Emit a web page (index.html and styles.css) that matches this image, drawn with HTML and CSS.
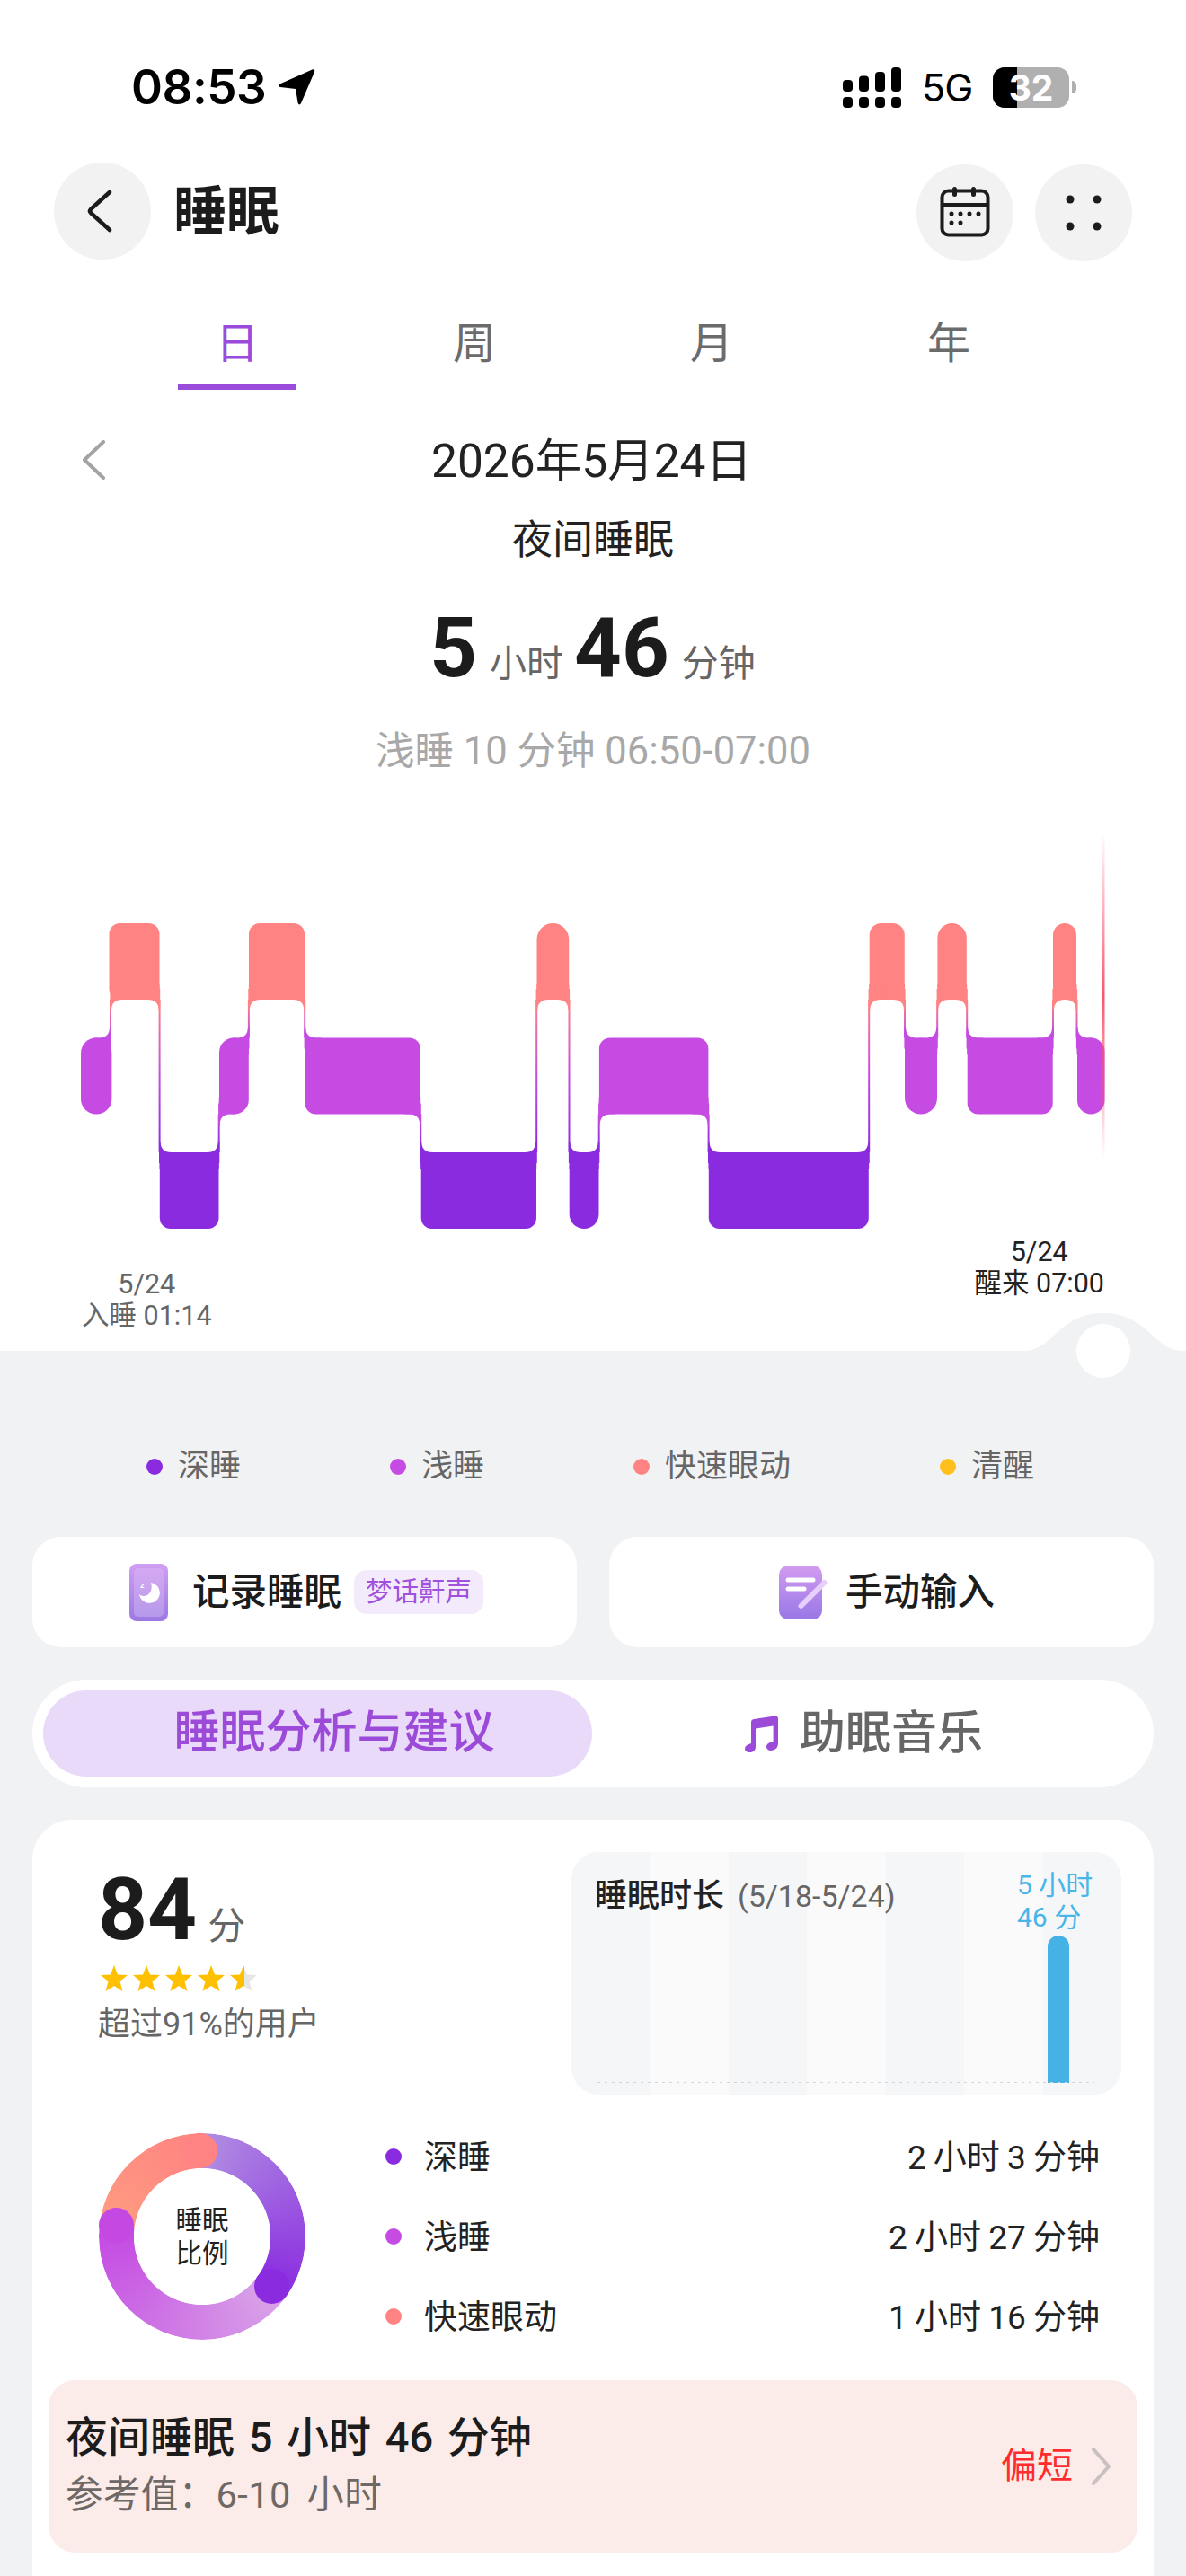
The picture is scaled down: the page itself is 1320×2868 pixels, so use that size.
FILE: index.html
```html
<!DOCTYPE html>
<html lang="zh">
<head>
<meta charset="utf-8">
<title>睡眠</title>
<link rel="stylesheet" href="styles.css">
</head>
<body>
<div class="page">
  <section class="top">
    <div class="status">
      <div class="status-left">
        <span class="time">08:53</span>
        <svg class="loc" viewBox="0 0 42 40"><path d="M38.5.5c2-.9 3.3.5 2.5 2.4L26 38c-.9 2-3 1.8-3.4-.4L20 22 3 20c-2.4-.3-2.7-2.4-.6-3.4z"/></svg>
      </div>
      <div class="status-right">
        <svg class="signal" viewBox="0 0 65 45">
          <rect x="0" y="14" width="11" height="13" rx="4"/><rect x="18" y="9.500" width="11" height="17.500" rx="4"/><rect x="36" y="5" width="11" height="22" rx="4"/><rect x="54" y="0" width="11" height="27" rx="4"/>
          <rect x="0" y="33" width="11" height="12" rx="4"/><rect x="18" y="33" width="11" height="12" rx="4"/><rect x="36" y="33" width="11" height="12" rx="4"/><rect x="54" y="33" width="11" height="12" rx="4"/>
        </svg>
        <span class="net">5G</span>
        <div class="battery"><span class="battery-fill"></span><span class="battery-num">32</span></div>
        <span class="battery-tip"></span>
      </div>
    </div>

    <div class="nav">
      <button class="round back" type="button">
        <svg class="round-icon" viewBox="0 0 108 108"><path class="stroke-dark" d="M62 33 41 52c-1.200 1.200-1.200 2.800 0 4l21 19"/></svg>
      </button>
      <h1 class="title">睡眠</h1>
      <div class="nav-right">
        <button class="round" type="button">
          <svg class="round-icon" viewBox="0 0 108 108">
            <rect class="cal-line" x="28.500" y="29.500" width="51" height="49" rx="7"/>
            <path class="cal-line" d="M28 45h52"/>
            <rect class="dot-dark" x="40" y="25" width="5" height="11" rx="2.500"/><rect class="dot-dark" x="61" y="25" width="5" height="11" rx="2.500"/>
            <circle class="dot-dark" cx="39" cy="55" r="2.500"/><circle class="dot-dark" cx="49" cy="55" r="2.500"/><circle class="dot-dark" cx="59" cy="55" r="2.500"/><circle class="dot-dark" cx="69" cy="55" r="2.500"/>
            <circle class="dot-dark" cx="39" cy="65" r="2.500"/><circle class="dot-dark" cx="49" cy="65" r="2.500"/>
          </svg>
        </button>
        <button class="round" type="button">
          <svg class="round-icon" viewBox="0 0 108 108">
            <circle class="dot-dark" cx="39" cy="39" r="4.500"/><circle class="dot-dark" cx="69" cy="39" r="4.500"/>
            <circle class="dot-dark" cx="39" cy="69" r="4.500"/><circle class="dot-dark" cx="69" cy="69" r="4.500"/>
          </svg>
        </button>
      </div>
    </div>

    <div class="tabs">
      <div class="tab"><span class="tab-label active">日</span></div>
      <div class="tab"><span class="tab-label">周</span></div>
      <div class="tab"><span class="tab-label">月</span></div>
      <div class="tab"><span class="tab-label">年</span></div>
    </div>

    <div class="date-row">
      <svg class="date-prev" viewBox="0 0 26 44"><path d="M24 2 3 22l21 20"/></svg>
      <div class="date">2026年5月24日</div>
    </div>
    <div class="sub-title">夜间睡眠</div>
    <div class="duration"><b>5</b><span>小时</span><b>46</b><span>分钟</span></div>
    <div class="range">浅睡 10 分钟 06:50-07:00</div>

    <svg class="chart" viewBox="0 927 1320 449">
      <defs>
        <linearGradient id="rl" gradientUnits="userSpaceOnUse" x1="0" x2="0" y1="1113" y2="1155"><stop offset="0" stop-color="#ff8383"/><stop offset="1" stop-color="#c64be3"/></linearGradient>
        <linearGradient id="ld" gradientUnits="userSpaceOnUse" x1="0" x2="0" y1="1240" y2="1283"><stop offset="0" stop-color="#c64be3"/><stop offset="1" stop-color="#8b2be0"/></linearGradient>
        <linearGradient id="rd" gradientUnits="userSpaceOnUse" x1="0" x2="0" y1="1113" y2="1283"><stop offset="0" stop-color="#ff8383"/><stop offset=".5" stop-color="#c64be3"/><stop offset="1" stop-color="#8b2be0"/></linearGradient>
        <linearGradient id="now" gradientUnits="userSpaceOnUse" x1="0" x2="0" y1="927" y2="1290"><stop offset="0" stop-color="#f9566e" stop-opacity="0"/><stop offset=".5" stop-color="#f9566e"/><stop offset="1" stop-color="#f9566e" stop-opacity="0"/></linearGradient>
        <path id="u" d="M-18-18H0V-12H.6V12H-1Q-1 0-13 0H-18Z"/>
        <path id="w" d="M18 18H0V12H-.6V-12H1Q1 0 13 0H18Z"/>
      </defs>
      <g class="s-r">
        <rect x="121.500" y="1028" width="56" height="85" rx="12"/>
        <rect x="277" y="1028" width="62" height="85" rx="12"/>
        <rect x="597.500" y="1028" width="35.700" height="85" rx="17.800"/>
        <rect x="967.700" y="1028" width="39.100" height="85" rx="13"/>
        <rect x="1043.400" y="1028" width="32.400" height="85" rx="16.200"/>
        <rect x="1172" y="1028" width="26" height="85" rx="13"/>
      </g>
      <g class="s-l">
        <rect x="90" y="1155.500" width="34.400" height="85" rx="17"/>
        <rect x="244" y="1155.500" width="32.800" height="85" rx="16"/>
        <rect x="339.500" y="1155.500" width="128.300" height="85" rx="12"/>
        <rect x="666.900" y="1155.500" width="121.500" height="85" rx="12"/>
        <rect x="1007" y="1155.500" width="36" height="85" rx="18"/>
        <rect x="1076.700" y="1155.500" width="95" height="85" rx="12"/>
        <rect x="1199" y="1155.500" width="30.500" height="85" rx="15.200"/>
      </g>
      <g class="s-d">
        <rect x="177.800" y="1283" width="65.700" height="85" rx="12"/>
        <rect x="468.700" y="1283" width="128.300" height="85" rx="12"/>
        <rect x="633.700" y="1283" width="32.800" height="85" rx="16.400"/>
        <rect x="788.800" y="1283" width="178" height="85" rx="12"/>
      </g>
      <rect x="122" y="1113" width="2" height="42.500" fill="url(#rl)"/>
      <use class="s-r" href="#u" transform="translate(123 1113) scale(-1 1)"/><use class="s-l" href="#w" transform="translate(123 1155.500) scale(-1 1)"/>
      <rect x="176.600" y="1113" width="2" height="170" fill="url(#rd)"/>
      <use class="s-r" href="#u" transform="translate(177.600 1113)"/><use class="s-d" href="#w" transform="translate(177.600 1283)"/>
      <rect x="242.700" y="1240.500" width="2" height="42.500" fill="url(#ld)"/>
      <use class="s-l" href="#u" transform="translate(243.700 1240.500) scale(-1 1)"/><use class="s-d" href="#w" transform="translate(243.700 1283) scale(-1 1)"/>
      <rect x="275.900" y="1113" width="2" height="42.500" fill="url(#rl)"/>
      <use class="s-r" href="#u" transform="translate(276.900 1113) scale(-1 1)"/><use class="s-l" href="#w" transform="translate(276.900 1155.500) scale(-1 1)"/>
      <rect x="338.200" y="1113" width="2" height="42.500" fill="url(#rl)"/>
      <use class="s-r" href="#u" transform="translate(339.200 1113)"/><use class="s-l" href="#w" transform="translate(339.200 1155.500)"/>
      <rect x="467.200" y="1240.500" width="2" height="42.500" fill="url(#ld)"/>
      <use class="s-l" href="#u" transform="translate(468.200 1240.500)"/><use class="s-d" href="#w" transform="translate(468.200 1283)"/>
      <rect x="596.200" y="1113" width="2" height="170" fill="url(#rd)"/>
      <use class="s-r" href="#u" transform="translate(597.200 1113) scale(-1 1)"/><use class="s-d" href="#w" transform="translate(597.200 1283) scale(-1 1)"/>
      <rect x="632.500" y="1113" width="2" height="170" fill="url(#rd)"/>
      <use class="s-r" href="#u" transform="translate(633.500 1113)"/><use class="s-d" href="#w" transform="translate(633.500 1283)"/>
      <rect x="665.700" y="1240.500" width="2" height="42.500" fill="url(#ld)"/>
      <use class="s-l" href="#u" transform="translate(666.700 1240.500) scale(-1 1)"/><use class="s-d" href="#w" transform="translate(666.700 1283) scale(-1 1)"/>
      <rect x="787.600" y="1240.500" width="2" height="42.500" fill="url(#ld)"/>
      <use class="s-l" href="#u" transform="translate(788.600 1240.500)"/><use class="s-d" href="#w" transform="translate(788.600 1283)"/>
      <rect x="966.200" y="1113" width="2" height="170" fill="url(#rd)"/>
      <use class="s-r" href="#u" transform="translate(967.200 1113) scale(-1 1)"/><use class="s-d" href="#w" transform="translate(967.200 1283) scale(-1 1)"/>
      <rect x="1006" y="1113" width="2" height="42.500" fill="url(#rl)"/>
      <use class="s-r" href="#u" transform="translate(1007 1113)"/><use class="s-l" href="#w" transform="translate(1007 1155.500)"/>
      <rect x="1042.200" y="1113" width="2" height="42.500" fill="url(#rl)"/>
      <use class="s-r" href="#u" transform="translate(1043.200 1113) scale(-1 1)"/><use class="s-l" href="#w" transform="translate(1043.200 1155.500) scale(-1 1)"/>
      <rect x="1075.200" y="1113" width="2" height="42.500" fill="url(#rl)"/>
      <use class="s-r" href="#u" transform="translate(1076.200 1113)"/><use class="s-l" href="#w" transform="translate(1076.200 1155.500)"/>
      <rect x="1171" y="1113" width="2" height="42.500" fill="url(#rl)"/>
      <use class="s-r" href="#u" transform="translate(1172 1113) scale(-1 1)"/><use class="s-l" href="#w" transform="translate(1172 1155.500) scale(-1 1)"/>
      <rect x="1197.500" y="1113" width="2" height="42.500" fill="url(#rl)"/>
      <use class="s-r" href="#u" transform="translate(1198.500 1113)"/><use class="s-l" href="#w" transform="translate(1198.500 1155.500)"/>
      <rect x="1227" y="927" width="2.500" height="363" fill="url(#now)"/>
    </svg>

    <div class="chart-labels">
      <div class="chart-label start">5/24<br>入睡 01:14</div>
      <div class="chart-label end">5/24<br>醒来 07:00</div>
    </div>

    <svg class="bump" viewBox="0 0 180 72">
      <path class="bump-fill" d="M0 42C32 42 38 0 88 0S144 42 176 42Z"/>
      <circle class="bump-dot" cx="88" cy="42" r="30"/>
    </svg>
  </section>

  <div class="legend">
    <div class="legend-item"><i class="dot c-d"></i>深睡</div>
    <div class="legend-item"><i class="dot c-l"></i>浅睡</div>
    <div class="legend-item"><i class="dot c-r"></i>快速眼动</div>
    <div class="legend-item"><i class="dot c-a"></i>清醒</div>
  </div>

  <div class="actions">
    <div class="action">
      <svg class="ico-phone" viewBox="0 0 43 64">
        <defs>
          <linearGradient id="pg" x1="0" x2="0" y1="0" y2="1"><stop offset="0" stop-color="#cf9ff2"/><stop offset="1" stop-color="#9d78e4"/></linearGradient>
          <linearGradient id="pi" x1="0" x2="0" y1="0" y2="1"><stop offset="0" stop-color="#d5a8f3"/><stop offset="1" stop-color="#b59ae9"/></linearGradient>
        </defs>
        <rect width="43" height="64" rx="8" fill="url(#pg)"/>
        <rect x="5" y="5" width="33" height="54" rx="5" fill="url(#pi)"/>
        <path class="white" d="M24 21A11.500 11.500 0 1 1 11 34c3 3 9 2.500 12-2 2-3 2-7 1-11Z"/>
        <text class="zzz" x="12" y="27">z</text>
      </svg>
      <span class="action-text">记录睡眠</span>
      <span class="tag">梦话鼾声</span>
    </div>
    <div class="action">
      <svg class="ico-note" viewBox="0 0 54 60">
        <defs><linearGradient id="ng" x1="0" x2="0" y1="0" y2="1"><stop offset="0" stop-color="#d29bf0"/><stop offset="1" stop-color="#9878e6"/></linearGradient></defs>
        <rect width="48" height="60" rx="10" fill="url(#ng)"/>
        <rect class="white" x="7.500" y="13.500" width="33" height="5" rx="2.500"/>
        <rect class="white" x="7.500" y="23.500" width="23" height="5" rx="2.500"/>
        <path class="pencil" d="M24.500 45 50.500 19"/>
      </svg>
      <span class="action-text">手动输入</span>
    </div>
  </div>

  <div class="segment">
    <div class="seg-on">睡眠分析与建议</div>
    <div class="seg-off">
      <svg class="ico-music" viewBox="0 0 38 41"><path d="M7 7.500c0-2 1.200-3.200 3-3.500L33 .4c2.400-.4 4 .9 4 3.200V31c0 4-2 6.500-5.500 7.500-4.200 1.200-7.500-.6-7.500-3.600 0-2.400 1.600-4 4.600-5.100l3-1V11.500L12 14.500V35c0 3.500-2 5.400-5 5.900C3 41.600 0 40 0 37c0-2.400 1.600-3.800 4-4.800l3-1.200z"/></svg>
      助眠音乐
    </div>
  </div>

  <section class="card">
    <div class="card-top">
      <div class="score">
        <div class="score-line"><b>84</b><span>分</span></div>
        <svg class="stars" viewBox="0 0 174 29">
          <defs>
            <path id="star" d="M15 0l4 10.500 11 .5-8.500 7 3 11-9.500-6-9.500 6 3-11L0 11l11-.5z"/>
            <linearGradient id="half"><stop offset=".53" stop-color="#ffc000"/><stop offset=".53" stop-color="#e6e6e6"/></linearGradient>
          </defs>
          <use class="star" href="#star"/><use class="star" href="#star" x="36"/><use class="star" href="#star" x="72"/><use class="star" href="#star" x="108"/>
          <path fill="url(#half)" transform="translate(144 0)" d="M15 0l4 10.500 11 .5-8.500 7 3 11-9.500-6-9.500 6 3-11L0 11l11-.5z"/>
        </svg>
        <div class="score-note">超过91%的用户</div>
      </div>
      <div class="mini">
        <div class="mini-stripes"><i></i><i></i><i></i><i></i><i></i><i></i><i></i></div>
        <div class="mini-title">睡眠时长<span>(5/18-5/24)</span></div>
        <div class="mini-value">5 小时<br>46 分</div>
        <div class="mini-bar"></div>
        <div class="mini-base"></div>
      </div>
    </div>

    <div class="ratio">
      <div class="donut">
        <div class="ring"></div>
        <i class="cap cap-d"></i><i class="cap cap-l"></i><i class="cap cap-r"></i>
        <div class="donut-text">睡眠<br>比例</div>
      </div>
      <div class="ratio-list">
        <div class="ratio-row"><i class="dot c-d"></i><span class="ratio-name">深睡</span><span class="ratio-val">2 小时 3 分钟</span></div>
        <div class="ratio-row"><i class="dot c-l"></i><span class="ratio-name">浅睡</span><span class="ratio-val">2 小时 27 分钟</span></div>
        <div class="ratio-row"><i class="dot c-r"></i><span class="ratio-name">快速眼动</span><span class="ratio-val">1 小时 16 分钟</span></div>
      </div>
    </div>

    <div class="verdict">
      <div class="verdict-text">
        <div class="verdict-title">夜间睡眠 5 小时 46 分钟</div>
        <div class="verdict-sub">参考值：6-10 小时</div>
      </div>
      <span class="verdict-tag">偏短</span>
      <svg class="verdict-arrow" viewBox="0 0 22 42"><path d="M2 2l17 19L2 40"/></svg>
    </div>
  </section>
</div>
</body>
</html>
```

FILE: styles.css
```css
* { box-sizing: border-box; }
html, body { margin: 0; padding: 0; }
body {
  width: 1320px;
  height: 2868px;
  overflow: hidden;
  background: #f1f2f4;
  font-family: Roboto, "Noto Sans CJK SC", sans-serif;
  color: #1c1c1c;
}
.page { width: 1320px; height: 2868px; overflow: hidden; }

.top { position: relative; height: 1504px; background: #fff; padding-top: 74px; }

/* status bar */
.status { display: flex; justify-content: space-between; align-items: center; height: 46px; padding: 0 122px 0 146px; color: #000; }
.status-left { display: flex; align-items: center; gap: 13px; }
.time { font: 600 53px/46px Inter, sans-serif; letter-spacing: -0.5px; }
.loc { width: 42px; height: 40px; fill: #000; }
.status-right { display: flex; align-items: center; }
.signal { width: 65px; height: 45px; fill: #000; }
.net { font: 400 43px/46px Inter, sans-serif; margin-left: 23px; letter-spacing: -1px; width: 56px; }
.battery { position: relative; width: 85px; height: 45px; margin-left: 23px; border-radius: 13px; background: #b0b0b0; overflow: hidden; }
.battery-fill { position: absolute; left: 0; top: 0; bottom: 0; width: 27px; background: #000; }
.battery-num { position: absolute; left: 0; right: 0; top: 0; text-align: center; color: #fff; font: 700 39px/46px Inter, sans-serif; }
.battery-tip { width: 5px; height: 14px; margin-left: 3px; background: #b0b0b0; border-radius: 0 7px 7px 0; }

/* nav */
.nav { display: flex; align-items: flex-start; height: 110px; margin-top: 61px; padding: 0 60px; }
.round { width: 108px; height: 108px; border: 0; padding: 0; border-radius: 50%; background: #f2f2f2; display: block; }
.round-icon { width: 108px; height: 108px; display: block; }
.stroke-dark { fill: none; stroke: #1c1c1c; stroke-width: 4.5; stroke-linecap: round; stroke-linejoin: round; }
.cal-line { fill: none; stroke: #1c1c1c; stroke-width: 4; }
.dot-dark { fill: #1c1c1c; }
.title { margin: 0 0 0 25px; font-size: 59px; line-height: 110px; font-weight: 700; }
.nav-right { margin-left: auto; margin-top: 2px; display: flex; gap: 24px; }

/* tabs */
.tabs { display: grid; grid-template-columns: repeat(4, 264px); margin-top: 60px; padding: 0 132px; }
.tab { display: flex; justify-content: center; }
.tab-label { display: block; width: 132px; height: 83px; padding-top: 2px; font-size: 48px; line-height: 60px; text-align: center; color: #6b6b6b; }
.tab-label.active { color: #9b4bdb; border-bottom: 6px solid #9b4bdb; }

/* summary */
.date-row { position: relative; height: 60px; margin-top: 50px; }
.date-prev { position: absolute; left: 91px; top: 6px; width: 26px; height: 44px; fill: none; stroke: #a3a3a3; stroke-width: 4; stroke-linecap: round; stroke-linejoin: round; }
.date { font-size: 51.500px; line-height: 60px; text-align: center; padding-right: 3px; color: #222; }
.sub-title { margin-top: 28px; font-size: 45px; line-height: 60px; text-align: center; color: #222; }
.duration { display: flex; justify-content: center; align-items: baseline; height: 100px; margin-top: 40px; padding-left: 11px; line-height: 100px; }
.duration b { font-size: 92px; font-weight: 700; color: #1c1c1c; }
.duration span { font-size: 41px; color: #666; margin: 0 12px 0 14px; }
.range { margin-top: 37px; font-size: 43.500px; line-height: 56px; text-align: center; color: #a8a8a8; }

/* chart */
.chart { display: block; width: 1320px; height: 449px; margin-top: 62px; }
.s-r { fill: #ff8383; }
.s-l { fill: #c64be3; }
.s-d { fill: #8b2be0; }
.chart-labels { display: flex; justify-content: space-between; align-items: flex-start; padding: 0 91px; }
.chart-label { font-size: 30.500px; line-height: 35px; text-align: center; }
.chart-label.start { margin-top: 36px; color: #666; }
.chart-label.end { color: #222; }
.bump { position: absolute; left: 1140px; top: 1462px; width: 180px; height: 72px; }
.bump-fill { fill: #f1f2f4; }
.bump-dot { fill: #fff; }

/* legend */
.legend { display: flex; justify-content: center; gap: 166px; height: 50px; margin-top: 104px; padding-right: 6px; }
.legend-item { display: flex; align-items: center; gap: 17px; font-size: 35px; line-height: 50px; color: #666; }
.dot { display: block; width: 18px; height: 18px; border-radius: 50%; flex: none; }
.c-d { background: #8b2be0; }
.c-l { background: #c64be3; }
.c-r { background: #ff8383; }
.c-a { background: #ffc01e; }

/* actions */
.actions { display: grid; grid-template-columns: 606px 606px; gap: 36px; margin-top: 53px; padding: 0 36px; }
.action { display: flex; align-items: center; height: 123px; border-radius: 32px; background: #fff; }
.ico-phone { width: 43px; height: 64px; margin-left: 108px; flex: none; }
.ico-note { width: 54px; height: 60px; margin-left: 189px; flex: none; }
.white { fill: #fff; }
.zzz { fill: #fff; font: 700 9px Roboto, sans-serif; }
.pencil { fill: none; stroke: #e6d0fb; stroke-width: 6; stroke-linecap: round; }
.action-text { font-size: 41.500px; line-height: 60px; font-weight: 500; color: #1c1c1c; margin-left: 27px; }
.ico-note + .action-text { margin-left: 20px; }
.tag { margin-left: 14px; width: 144px; height: 49px; border-radius: 14px; background: #f3ebfb; color: #a050dc; font-size: 29.500px; line-height: 49px; text-align: center; }

/* segment */
.segment { display: flex; height: 120px; margin: 36px 36px 0; padding: 12px; border-radius: 60px; background: #fff; }
.seg-on { width: 611px; height: 96px; padding-left: 37px; border-radius: 48px; background: #e8daf8; color: #9b4bd8; font-size: 51px; font-weight: 500; line-height: 94px; text-align: center; }
.seg-off { flex: 1; display: flex; justify-content: center; align-items: center; gap: 23px; color: #666; font-size: 51px; font-weight: 500; line-height: 96px; padding-right: 8px; }
.ico-music { width: 38px; height: 41px; fill: #9b4bd8; flex: none; }

/* main card */
.card { height: 860px; margin: 36px 36px 0; background: #fff; border-radius: 44px 44px 0 0; padding-top: 36px; }
.card-top { display: flex; justify-content: space-between; padding: 0 36px 0 73px; }
.score { padding-top: 14px; }
.score-line { display: flex; align-items: baseline; height: 100px; line-height: 100px; }
.score-line b { font-size: 96px; font-weight: 700; color: #1c1c1c; }
.score-line span { font-size: 42px; color: #666; margin-left: 12px; }
.stars { display: block; width: 176px; height: 29px; margin: 12px 0 0 2px; }
.star { fill: #ffc000; }
.score-note { margin-top: 15px; font-size: 36px; line-height: 44px; color: #666; }

.mini { position: relative; width: 612px; height: 270px; border-radius: 30px; overflow: hidden; }
.mini-stripes { position: absolute; inset: 0; display: grid; grid-template-columns: repeat(7, 1fr); }
.mini-stripes i:nth-child(odd) { background: #f5f6f8; }
.mini-stripes i:nth-child(even) { background: #fafafa; }
.mini-title { position: relative; display: flex; align-items: center; gap: 15px; padding: 25px 0 0 26px; font-size: 36px; line-height: 48px; font-weight: 500; color: #222; }
.mini-title span { font-size: 34px; font-weight: 400; color: #666; }
.mini-value { position: absolute; left: 496px; top: 19px; font-size: 30px; line-height: 36px; color: #4ab5e8; white-space: nowrap; }
.mini-bar { position: absolute; left: 530px; top: 93px; width: 24px; height: 164px; border-radius: 12px 12px 0 0; background: #45b1e5; }
.mini-base { position: absolute; left: 29px; right: 30px; top: 256px; height: 1px; background: repeating-linear-gradient(90deg, #d4d4d4 0 3px, transparent 3px 8px); }

.ratio { display: flex; align-items: center; height: 266px; margin-top: 25px; padding-left: 74px; }
.donut { position: relative; width: 230px; height: 230px; flex: none; }
.ring {
  position: absolute; inset: 0; border-radius: 50%;
  background: conic-gradient(#b08ee2 0deg, #8a2be0 126deg, #d9a5e8 126deg, #c448e2 277deg, #fe9b80 277deg, #ff8383 360deg);
  -webkit-mask: radial-gradient(closest-side, transparent 65.800%, #000 66.500%);
  mask: radial-gradient(closest-side, transparent 65.800%, #000 66.500%);
}
.cap { position: absolute; width: 39px; height: 39px; border-radius: 50%; }
.cap-d { left: 173px; top: 151px; background: #8a2be0; }
.cap-l { left: 0px; top: 83px; background: #c448e2; }
.cap-r { left: 92.500px; top: 0; background: #ff8383; }
.donut-text { position: absolute; left: 0; right: 0; top: 79px; font-size: 29.500px; line-height: 37px; text-align: center; color: #222; }
.ratio-list { flex: 1; margin-left: 89px; padding-right: 60px; }
.ratio-row { display: flex; align-items: center; height: 89px; font-size: 37px; color: #222; }
.ratio-name { margin-left: 25px; padding-bottom: 4px; }
.ratio-val { margin-left: auto; padding-bottom: 4px; word-spacing: -1px; }

.verdict { display: flex; align-items: center; height: 192px; margin: 27px 18px 0; padding: 0 29px 0 19px; border-radius: 30px; background: #fbebe9; }
.verdict-text { flex: 1; }
.verdict-title { font-size: 47px; line-height: 64px; font-weight: 500; color: #1c1c1c; word-spacing: 4px; }
.verdict-sub { font-size: 41.500px; line-height: 64px; color: #6e6866; letter-spacing: 0.4px; word-spacing: 7px; }
.verdict-tag { font-size: 40px; line-height: 60px; color: #ff2d2d; }
.verdict-arrow { width: 22px; height: 42px; margin-left: 21px; fill: none; stroke: #c9c0c0; stroke-width: 4; stroke-linecap: round; stroke-linejoin: round; }
```
